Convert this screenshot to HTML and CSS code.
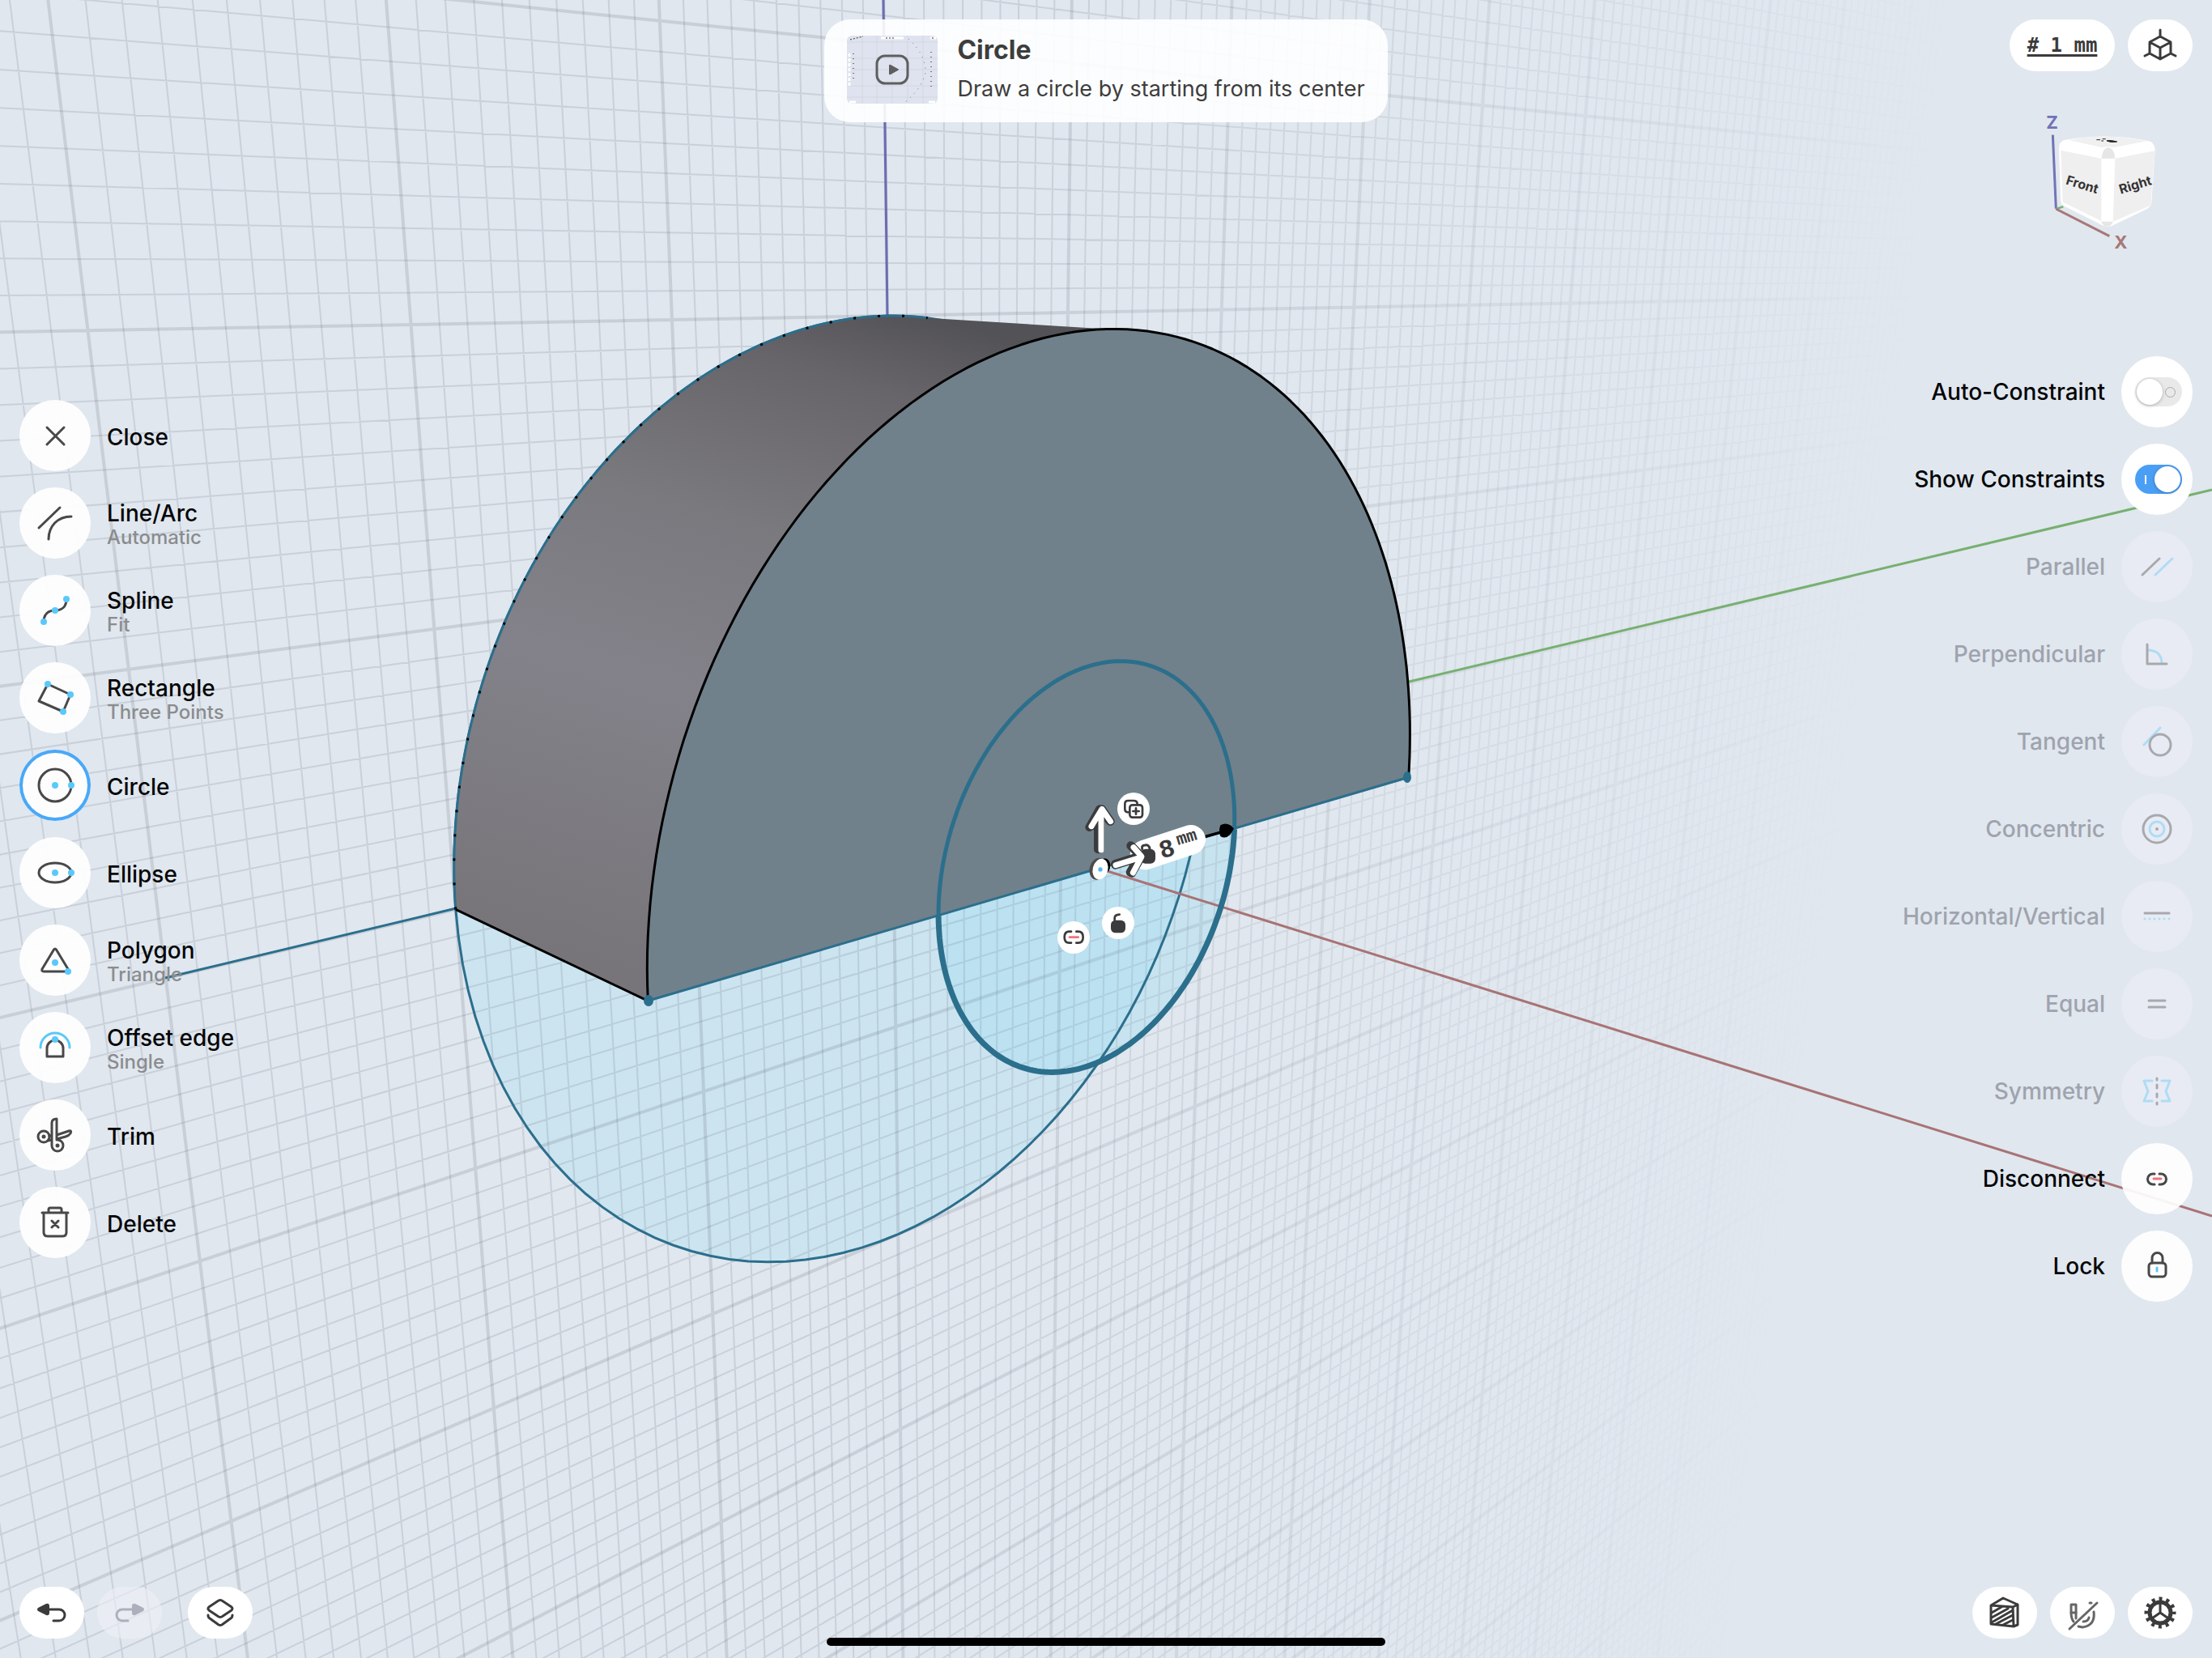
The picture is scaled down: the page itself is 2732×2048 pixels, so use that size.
FILE: index.html
```html
<!DOCTYPE html>
<html lang="en">
<head>
<meta charset="utf-8">
<meta name="viewport" content="width=device-width, initial-scale=1">
<title>Sketch – Circle</title>
<link rel="stylesheet" href="styles.css">
</head>
<body>
<div class="app">
  <svg class="scene" viewBox="0 0 2732 2048" preserveAspectRatio="xMidYMid slice" aria-label="3D view">
    <defs>
      <linearGradient id="fade" gradientUnits="userSpaceOnUse" x1="1240" y1="145" x2="2380" y2="302">
        <stop offset="0" stop-color="#fff"/>
        <stop offset=".4" stop-color="#fff" stop-opacity=".68"/>
        <stop offset=".75" stop-color="#fff" stop-opacity=".3"/>
        <stop offset="1" stop-color="#fff" stop-opacity="0"/>
      </linearGradient>
      <mask id="fadeMask" maskUnits="userSpaceOnUse" x="0" y="0" width="2732" height="2048">
        <rect width="2732" height="2048" fill="url(#fade)"/>
      </mask>
      <linearGradient id="side" gradientUnits="userSpaceOnUse" x1="1150" y1="390" x2="900" y2="1235">
        <stop offset="0" stop-color="#535256"/>
        <stop offset=".12" stop-color="#67656a"/>
        <stop offset=".35" stop-color="#7a797e"/>
        <stop offset=".6" stop-color="#83828a"/>
        <stop offset="1" stop-color="#777579"/>
      </linearGradient>
    </defs>
    <path id="backFill" class="fill-back"/>
    <path id="ringFill" class="fill-ring"/>
    <g mask="url(#fadeMask)">
      <path id="gridMinor" class="grid-minor"/>
      <path id="gridMajor" class="grid-major"/>
    </g>
    <line class="axis axis-z" x1="1091" y1="0" x2="1096" y2="392"/>
    <line class="axis axis-y" x1="1736" y1="843" x2="2732" y2="605"/>
    <line class="sketch" x1="204" y1="1208" x2="563" y2="1122"/>
    <path id="backRing" class="sketch"/>
    <path id="sideFace" fill="url(#side)"/>
    <path id="frontFace" fill="#70818b"/>
    <path id="backEdge" class="sketch"/>
    <path id="backDash" class="edge edge-dash"/>
    <path id="frontEdge" class="edge"/>
    <line class="axis axis-x" x1="1358" y1="1073" x2="2732" y2="1502"/>
    <path class="sketch" d="M801 1236 1740 960"/>
    <path id="ringLower" class="sketch sketch-bold"/>
    <path id="ringUpper" class="sketch sketch-mid"/>
    <ellipse class="node" cx="801" cy="1236" rx="6" ry="7"/>
    <ellipse class="node" cx="1738" cy="960" rx="5" ry="7"/>
    <svg x="1260" y="960" width="320" height="240" viewBox="0 0 960 720">
      <path d="M686 220 750 202" stroke="#000" stroke-width="10"/>
      <path d="M742 178q20-12 40 2l10 11-14 22q-18 18-36 6-8-20 0-41z"/>
      <path d="M462 288 632 232" stroke="#fff" stroke-width="110" stroke-linecap="round"/>
      <g transform="rotate(-17 560 260)" fill="#3b3b3d">
        <text class="dim-value" x="514" y="290">8</text>
        <text class="dim-unit" x="586" y="260">mm</text>
      </g>
      <rect x="446" y="266" width="55" height="54" rx="18" fill="#3b3b3d"/>
      <path d="M452 266q-3-14 10-14 16-3 18 14" fill="none" stroke="#3b3b3d" stroke-width="9" stroke-linecap="round"/>
      <g fill="none" stroke-linecap="round" stroke-linejoin="round">
        <path d="M288 268V130M256 186 294 118 332 164" stroke="#3b3b3d" stroke-width="30"/>
        <path d="M297 268V128M264 182 303 118 335 164" stroke="#3b3b3d" stroke-width="30"/>
        <path d="M300 270V130M264 182 303 118 335 164" stroke="#fff" stroke-width="21"/>
        <path d="M352 322 440 294M410 254 444 290 408 352" stroke="#3b3b3d" stroke-width="32"/>
        <path d="M352 326 444 298M416 258 450 294 414 356" stroke="#3b3b3d" stroke-width="30"/>
        <path d="M354 326 444 298M420 260 450 294 418 354" stroke="#fff" stroke-width="21"/>
      </g>
      <ellipse cx="314" cy="328" rx="20" ry="27"/>
      <ellipse cx="288" cy="340" rx="31" ry="41" transform="rotate(14 288 340)" fill="#4b4b4e"/>
      <ellipse cx="297" cy="341" rx="28" ry="39" transform="rotate(14 297 341)" fill="#fff"/>
      <circle cx="297" cy="342" r="8" fill="#53b6f7"/>
    </svg>
    <foreignObject x="1380" y="979" width="40" height="40">
      <button class="mini" type="button" aria-label="Duplicate"><svg viewBox="0 0 120 120"><path d="M40 73q-12 0-12-12V42q0-12 12-12h20q14 0 14 12" class="s8"/><rect x="46" y="46" width="47" height="46" rx="10" class="s8"/><path d="M69 58v22M58 69h22" class="s8"/></svg></button>
    </foreignObject>
    <foreignObject x="1361" y="1120" width="40" height="40">
      <button class="mini" type="button" aria-label="Unlock"><svg viewBox="0 0 120 120"><path d="M47 52V42q0-12 18-13" class="s8"/><rect x="33" y="50" width="54" height="47" rx="17" class="fill"/></svg></button>
    </foreignObject>
    <foreignObject x="1306" y="1138" width="40" height="40">
      <button class="mini" type="button" aria-label="Disconnect point"><svg viewBox="0 0 120 120"><path d="M51 38H44q-18 0-18 21t18 21h7M70 38h7q18 0 18 21t-18 21h-7" class="s8"/><path d="M45 59h32" class="s8 red"/></svg></button>
    </foreignObject>
  </svg>

  <section class="hint">
    <svg class="hint-thumb" viewBox="0 0 112 84" aria-hidden="true">
      <rect width="112" height="84" rx="6" fill="#dfe3ef"/>
      <path d="M19 0V84M37 0V84M56 0V84M75 0V84M94 0V84M0 8H112M0 28H112M0 42H112M0 62H112M0 76H112" stroke="#d3d7e1"/>
      <path d="M76 4Q98 24 97 46 92 66 72 82" fill="none" stroke="#3b7c98" stroke-dasharray="1 6"/>
      <path d="M3 22V62" stroke="#fff" stroke-width="3" stroke-dasharray="4 2"/>
      <path d="M8 22V56M104 20V64" stroke="#777" stroke-width="2" stroke-dasharray="1 5"/>
      <path d="M42 3h28M103 3h7M3 82h8M101 82h8" stroke="#fff" stroke-width="3"/>
      <path d="M48 3h12M105 3h3M4 5 20 1" stroke="#333" stroke-dasharray="2 2"/>
      <rect x="37" y="25" width="38" height="34" rx="10" fill="none" stroke="#5e5e60" stroke-width="3"/>
      <path d="M52 37v10q0 2 2 1l9-5q2-1 0-2l-9-5q-2-1-2 1z" fill="#5e5e60"/>
    </svg>
    <div class="hint-text">
      <h1>Circle</h1>
      <p>Draw a circle by starting from its center</p>
    </div>
  </section>

  <div class="corner">
    <div class="bar">
      <button class="pill pill-wide" type="button"># 1 mm</button>
      <button class="pill" type="button" aria-label="Views"><svg viewBox="0 0 80 64"><path class="s3" d="M40 13v8l13 7v14l-13 7-13-7V28l13-7M27 28l13 7 13-7M40 35v13M27 42l-6 3M53 42l6 3"/></svg></button>
    </div>
    <svg class="cube" viewBox="228 411 480 528" aria-label="Orientation cube">
      <path d="M286 503 298 776" stroke="#7173b6" stroke-width="9"/>
      <path d="M298 777 325 769" stroke="#77b57a" stroke-width="8"/>
      <path d="M298 777 496 878" stroke="#a87778" stroke-width="9"/>
      <path d="M328 522Q490 492 648 527 664 536 665 560L652 752Q650 770 634 778L505 840Q488 846 470 838L325 765Q316 758 315 740L309 552Q310 528 328 522z" fill="#fff"/>
      <path d="M345 522Q480 494 634 526L510 550Q492 544 470 550z" fill="#f0f0f0"/>
      <path d="M316 560 466 590V822L323 752z" fill="#efefef"/>
      <path d="M517 590 664 562 649 764 509 824z" fill="#efefef"/>
      <path d="M467 590Q470 552 492 550 514 552 517 590z" fill="#e6e6e6"/>
      <path d="M465 824h45q-8 18-22 18t-23-18z" fill="#e6e6e6"/>
      <path d="M448 521h14M470 518h12M466 525h8M486 524q20-2 38 4-20 4-36-2z" fill="#222" stroke="#222" stroke-width="3"/>
      <text class="axis-name" x="262" y="479" fill="#7173b6">Z</text>
      <text class="axis-name" x="514" y="925" fill="#a87778">X</text>
      <text class="face-name" x="332" y="685" transform="rotate(17 332 685)">Front</text>
      <text class="face-name" x="538" y="722" transform="rotate(-17 538 722)">Right</text>
    </svg>
  </div>

  <nav class="tools tools-left" aria-label="Sketch tools">
    <button class="tool" type="button"><span class="disc"><svg viewBox="0 0 88 88"><path class="s3" d="M34 34 55 55M55 34 34 55"/></svg></span><span class="name">Close</span></button>
    <button class="tool" type="button"><span class="disc"><svg viewBox="0 0 88 88"><path class="s3" d="M24 50 50 25M36 64C36 48 47 36 64 36"/></svg></span><span class="name">Line/Arc<small>Automatic</small></span></button>
    <button class="tool" type="button"><span class="disc"><svg viewBox="0 0 88 88"><path class="s3" d="M30 58C30 48 36 44 44 44S58 40 58 30"/><g class="dot"><circle cx="30" cy="58" r="4"/><circle cx="44" cy="44" r="4"/><circle cx="58" cy="30" r="4"/></g></svg></span><span class="name">Spline<small>Fit</small></span></button>
    <button class="tool" type="button"><span class="disc"><svg viewBox="0 0 88 88"><path class="s3" d="M35 27 63 40 54 61 24 48z"/><g class="dot"><circle cx="35" cy="27" r="4"/><circle cx="63" cy="40" r="4"/><circle cx="54" cy="61" r="4"/></g></svg></span><span class="name">Rectangle<small>Three Points</small></span></button>
    <button class="tool" type="button" aria-pressed="true"><span class="disc disc-active"><svg viewBox="0 0 88 88"><circle class="s3" cx="44" cy="44" r="20"/><g class="dot"><circle cx="44" cy="44" r="4"/><circle cx="64" cy="44" r="4"/></g></svg></span><span class="name">Circle</span></button>
    <button class="tool" type="button"><span class="disc"><svg viewBox="0 0 88 88"><ellipse class="s3" cx="44" cy="44" rx="20" ry="12"/><g class="dot"><circle cx="44" cy="44" r="4"/><circle cx="64" cy="44" r="4"/></g></svg></span><span class="name">Ellipse</span></button>
    <button class="tool" type="button"><span class="disc"><svg viewBox="0 0 88 88"><path class="s3" d="M42.500 31q1.500-2 3 0L60 55q1 3-2 3H30q-3 0-2-3z"/><g class="dot"><circle cx="44" cy="47" r="4"/><circle cx="60" cy="58" r="4"/></g></svg></span><span class="name">Polygon<small>Triangle</small></span></button>
    <button class="tool" type="button"><span class="disc"><svg viewBox="0 0 88 88"><path class="s3 blue" d="M26 44a18 18 0 0 1 36 0"/><path class="s3" d="M34 55V45a10 10 0 0 1 20 0V55z"/><circle class="dot" cx="44" cy="34" r="4"/></svg></span><span class="name">Offset edge<small>Single</small></span></button>
    <button class="tool" type="button"><span class="disc"><svg viewBox="0 0 88 88"><circle class="s3" cx="30" cy="46" r="7"/><circle cx="30" cy="46" r="2.500"/><circle cx="47" cy="57" r="2.500"/><path class="s3" d="M40 57V29q0-5 6-5V50M40 57a7 7 0 1 0 7-7M46 44 61 39q4-1 2 3-2 3-6 4L46 49M35 51l5-1M37 45l3 0"/></svg></span><span class="name">Trim</span></button>
    <button class="tool" type="button"><span class="disc"><svg viewBox="0 0 88 88"><path class="s3" d="M28 32H60M36 32V28q0-2 2-2H50q2 0 2 2v4M30 32V56q0 5 5 5H53q5 0 5-5V32M40 42l8 8M48 42l-8 8"/></svg></span><span class="name">Delete</span></button>
  </nav>

  <aside class="tools tools-right" aria-label="Constraints">
    <label class="tool"><span class="name">Auto-Constraint</span><span class="disc disc-solid"><input class="switch" type="checkbox"></span></label>
    <label class="tool"><span class="name">Show Constraints</span><span class="disc disc-solid"><input class="switch" type="checkbox" checked></span></label>
    <button class="tool" type="button" disabled><span class="name">Parallel</span><span class="disc"><svg viewBox="0 0 88 88"><path class="s3" d="M26 54 47 34"/><path class="s3 blue" d="M42 54 63 34"/></svg></span></button>
    <button class="tool" type="button" disabled><span class="name">Perpendicular</span><span class="disc"><svg viewBox="0 0 88 88"><path class="s3 blue" d="M34 39Q49 40 50 54"/><path class="s3" d="M32 32V56H56"/></svg></span></button>
    <button class="tool" type="button" disabled><span class="name">Tangent</span><span class="disc"><svg viewBox="0 0 88 88"><path class="s3 blue" d="M28 48 48 27"/><circle class="s3" cx="48" cy="48" r="13"/></svg></span></button>
    <button class="tool" type="button" disabled><span class="name">Concentric</span><span class="disc"><svg viewBox="0 0 88 88"><circle class="s3" cx="44" cy="44" r="17"/><circle class="s3 blue" cx="44" cy="44" r="9"/><circle cx="44" cy="44" r="2"/></svg></span></button>
    <button class="tool" type="button" disabled><span class="name">Horizontal/Vertical</span><span class="disc"><svg viewBox="0 0 88 88"><path class="s3" d="M29 40H59"/><path class="s3 blue" d="M29 47H60" stroke-dasharray="0 6"/></svg></span></button>
    <button class="tool" type="button" disabled><span class="name">Equal</span><span class="disc"><svg viewBox="0 0 88 88"><path class="s3" d="M34 40H54M34 48H54"/></svg></span></button>
    <button class="tool" type="button" disabled><span class="name">Symmetry</span><span class="disc"><svg viewBox="0 0 88 88"><path class="s3 blue" d="M38 31H28l5 13-5 12h10M50 31H60l-5 13 5 12H50"/><path class="s3" d="M44 28v2M44 36v4M44 47v4M44 58v2"/></svg></span></button>
    <button class="tool" type="button"><span class="name">Disconnect</span><span class="disc"><svg viewBox="0 0 88 88"><path class="s3" d="M41 38H39a6 6 0 0 0 0 13h2M47 38h2a6 6 0 0 1 0 13h-2"/><path class="s3 red" d="M40 44H49"/></svg></span></button>
    <button class="tool" type="button"><span class="name">Lock</span><span class="disc"><svg viewBox="0 0 88 88"><rect class="s3" x="34" y="40" width="21" height="17" rx="4"/><path class="s3" d="M38 40V34a6 6 0 0 1 13 0V40"/><path class="s3 blue" d="M44 46v4"/></svg></span></button>
  </aside>

  <div class="bar bar-left">
    <button class="pill" type="button" aria-label="Undo"><svg viewBox="0 0 80 64"><path class="fill" d="M23 26 33 21q4-1 4 3v8q0 4-4 3L23 30q-2-2 0-4z"/><path class="s3" d="M36 28H49a7 7 0 0 1 0 14H42"/></svg></button>
    <button class="pill" type="button" aria-label="Redo" disabled><svg viewBox="0 0 80 64"><path class="fill" d="M57 26 47 21q-4-1-4 3v8q0 4 4 3L57 30q2-2 0-4z"/><path class="s3" d="M43 28H31a7 7 0 0 0 0 14H38"/></svg></button>
    <button class="pill pill-apart" type="button" aria-label="Items"><svg viewBox="0 0 80 64"><path class="s3" d="M38 17q2-1 4 0L54 25q2 2 0 4L42 37q-2 1-4 0L26 29q-2-2 0-4zM25 35q0 3 2 4l11 8q2 1 4 0l11-8q2-1 2-4"/></svg></button>
  </div>
  <div class="home" aria-hidden="true"></div>
  <div class="bar bar-right">
    <button class="pill" type="button" aria-label="Section view"><svg viewBox="0 0 80 64"><path class="s3" d="M23 23 50 25 51 49 23 46zM23 23 38 14 56 22V47L51 49M50 25 56 22M24 32 36 25M24 38 44 27M24 44 50 29M29 46 50 35M38 47 50 41"/></svg></button>
    <button class="pill pill-muted" type="button" aria-label="Snapping off"><svg viewBox="0 0 80 64"><path class="s3" d="M26 22h6v10h-6z" fill="currentColor"/><path class="s3" d="M26 32q0 7 3 11M32 32v7M49 20h2M54 31Q56 48 40 50L35 49M48 38Q47 43 41 43"/><path class="s3" d="M24 52 58 20"/></svg></button>
    <button class="pill" type="button" aria-label="Settings"><svg viewBox="0 0 80 64"><circle cx="40" cy="32" r="17" fill="none" stroke="currentColor" stroke-width="5" stroke-dasharray="4 4.900" stroke-dashoffset="2"/><circle cx="40" cy="32" r="13" fill="none" stroke="currentColor" stroke-width="5"/><path class="s3" d="M40 32V20M40 32 30 39M40 32 50 39"/></svg></button>
  </div>
</div>
<script src="scene.js"></script>
</body>
</html>
```
FILE: styles.css
```css
* { box-sizing: border-box; }

body {
  margin: 0;
  background: #e0e7ef;
  color: #050505;
  font-family: Inter, "Liberation Sans", sans-serif;
}

button {
  padding: 0;
  border: 0;
  background: none;
  color: inherit;
  font: inherit;
}

.app {
  display: grid;
  grid-template-columns: 1fr auto 1fr;
  grid-template-rows: 1fr;
  min-height: 100vh;
  padding: 24px;
  overflow: hidden;
}

.app > * { grid-row: 1; }

/* 3D view */
.scene {
  position: absolute;
  inset: 0;
  width: 100%;
  height: 100%;
}

.app > :not(.scene) { z-index: 1; }

.fill-back { fill: #c3e3f1; fill-opacity: .7; }
.fill-ring { fill: #a8ddf1; fill-opacity: .45; }
.grid-minor, .grid-major { fill: none; stroke: #4b505c; }
.grid-minor { stroke-width: 2; stroke-opacity: .15; }
.grid-major { stroke-width: 4; stroke-opacity: .16; }
.axis { stroke-width: 3; }
.axis-x { stroke: #a87374; }
.axis-y { stroke: #77b070; }
.axis-z { stroke: #6b6cb2; }
.sketch { fill: none; stroke: #2b6f8c; stroke-width: 3; }
.sketch-mid { stroke-width: 5; }
.sketch-bold { stroke-width: 7; }
.edge { fill: none; stroke: #000; stroke-width: 3; stroke-linejoin: round; }
.edge-dash { stroke-dasharray: 3 27; }
.node { fill: #2b6f8c; }

.dim-value, .dim-unit { font-family: "Liberation Mono", monospace; font-weight: 700; }
.dim-value { font-size: 94px; }
.dim-unit { font-size: 64px; }

.mini {
  display: block;
  width: 40px;
  height: 40px;
  border-radius: 50%;
  background: #fff;
  color: #3b3b3d;
}
.mini svg { display: block; width: 40px; height: 40px; }

/* Shared icon strokes */
.s3, .s8 {
  fill: none;
  stroke: currentColor;
  stroke-width: 3;
  stroke-linecap: round;
  stroke-linejoin: round;
}
.s8 { stroke-width: 8; }
.fill { fill: currentColor; }
.dot { fill: #5ac8fa; }
.blue { stroke: #5ac8fa; }
.red { stroke: #f4717c; }

/* Hint */
.hint {
  grid-column: 2;
  align-self: start;
  display: flex;
  align-items: flex-start;
  gap: 24px;
  height: 127px;
  padding: 20px 28px;
  border-radius: 32px;
  background: rgba(255, 255, 255, .9);
  color: #3d3d3d;
}
.hint-thumb { flex: none; width: 112px; height: 84px; }
.hint h1 { margin: 0; font-size: 32px; line-height: 36px; font-weight: 700; }
.hint p { margin: 12px 0 0; font-size: 27px; line-height: 36px; white-space: nowrap; }

/* Top right corner */
.corner {
  grid-column: 3;
  align-self: start;
  justify-self: end;
  display: flex;
  flex-direction: column;
  align-items: flex-end;
  gap: 48px;
}
.cube { width: 160px; height: 176px; margin-right: 32px; }
.axis-name { font-size: 66px; font-weight: 700; }
.face-name { font-size: 48px; font-weight: 700; fill: #333; }

/* Pill buttons */
.bar { display: flex; gap: 16px; }
.pill {
  width: 80px;
  height: 64px;
  border-radius: 32px;
  background: #fff;
  color: #3b3b3b;
}
.pill svg { display: block; width: 80px; height: 64px; }
.pill-wide {
  width: 130px;
  font: 700 24px/64px "DejaVu Sans Mono", monospace;
  text-decoration: underline 3px;
  text-underline-offset: 3px;
}
.pill-apart { margin-left: 16px; }
.pill-muted { color: #666; }
.pill:disabled { background: rgba(240, 240, 246, .6); color: #adb0ba; }
.bar-left { grid-column: 1; align-self: end; }
.bar-right { grid-column: 3; align-self: end; justify-self: end; }
.home {
  grid-column: 2;
  align-self: end;
  justify-self: center;
  width: 690px;
  height: 10px;
  margin-bottom: -9px;
  border-radius: 5px;
  background: #000;
}

/* Side tool lists */
.tools {
  grid-column: 1;
  align-self: center;
  justify-self: start;
  display: flex;
  flex-direction: column;
  align-items: flex-start;
  gap: 20px;
}
.tools-left .name { padding-top: 3px; }
.tools-right { grid-column: 3; justify-self: end; align-items: flex-end; }
.tool {
  display: flex;
  align-items: center;
  gap: 20px;
  text-align: left;
}
.disc {
  flex: none;
  display: flex;
  align-items: center;
  justify-content: center;
  width: 88px;
  height: 88px;
  border-radius: 50%;
  background: rgba(255, 255, 255, .92);
  color: #484848;
}
.disc svg { display: block; width: 88px; height: 88px; fill: currentColor; }
.disc .dot { fill: #5ac8fa; }
.disc-active { box-shadow: inset 0 0 0 4px #4aa8f7; }
.disc-solid { background: #fff; }
.name { font-size: 28px; line-height: 32px; font-weight: 500; }
.name small { display: block; font-size: 24px; line-height: 28px; font-weight: 500; color: #8b8c8e; }
.tool:disabled .name { color: #9fa3ad; }
.tool:disabled .disc { background: #e8ebf3; }
.tool:disabled .disc svg { opacity: .4; }

.switch {
  appearance: none;
  display: flex;
  align-items: center;
  justify-content: space-between;
  width: 58px;
  height: 36px;
  margin: 0 0 0 4px;
  padding: 2px;
  border-radius: 18px;
  background: #e9e9ea;
}
.switch::before {
  content: "";
  width: 32px;
  height: 32px;
  border-radius: 50%;
  background: #fff;
  box-shadow: 0 1px 4px rgba(0, 0, 0, .25);
}
.switch::after {
  content: "";
  width: 11px;
  height: 11px;
  margin-right: 6px;
  border: 1px solid #aaa;
  border-radius: 50%;
}
.switch:checked { flex-direction: row-reverse; background: #4a9ff5; }
.switch:checked::after { width: 2px; margin: 0 0 0 10px; border: 0; border-radius: 0; background: #fff; }
```
FILE: scene.js
```js
// Perspective of two parallel planes that share their vanishing points.
// One unit is ten millimetres; n runs along Y and m runs down along Z.
const VY = [3865, 339];
const VZ = [1203, 9500];
const back = { o: [1103, 995], g: 0.0818, h: 0.0332 };
const front = { o: [1355, 1074], g: 0.0905, h: 0.0367 };

function project(plane, n, m) {
  const a = n * plane.g;
  const b = m * plane.h;
  const w = 1 + a + b;
  return [0, 1].map(i => ((plane.o[i] + a * VY[i] + b * VZ[i]) / w).toFixed(1)).join(' ');
}

function arc(plane, r, from, to) {
  const steps = 120;
  const pts = [];
  for (let i = 0; i <= steps; i++) {
    const t = (from + (to - from) * i / steps) * Math.PI / 180;
    pts.push(project(plane, r * Math.cos(t), -r * Math.sin(t)));
  }
  return pts;
}

function draw(id, d) {
  document.getElementById(id).setAttribute('d', d);
}

let minor = '';
let major = '';
for (let i = -50; i <= 130; i++) {
  const n = i / 10;
  const d = `M${project(back, n, -6)}L${project(back, n, 14)}`;
  if (i % 10) minor += d; else major += d;
}
for (let i = -60; i <= 140; i++) {
  const m = i / 10;
  const d = `M${project(back, -5, m)}L${project(back, 13, m)}`;
  if (i % 10) minor += d; else major += d;
}
draw('gridMinor', minor);
draw('gridMajor', major);

const circle = arc(back, 2, 0, 360).join('L');
draw('backFill', `M${circle}Z`);
draw('backRing', `M${circle}Z`);
draw('ringFill', `M${arc(front, 0.8, 180, 360).join('L')}Z`);

const rim = arc(back, 2, 180, 84);
const lip = arc(front, 2, 180, 90);
draw('sideFace', `M${rim.join('L')}L${lip.reverse().join('L')}Z`);
draw('backEdge', `M${rim.join('L')}`);
draw('backDash', `M${rim.join('L')}`);

const face = arc(front, 2, 180, 0).join('L');
draw('frontFace', `M${face}Z`);
draw('frontEdge', `M${project(back, -2, 0)}L${face}`);
draw('ringUpper', `M${arc(front, 0.8, 0, 180).join('L')}`);
draw('ringLower', `M${arc(front, 0.8, 180, 360).join('L')}`);
```
